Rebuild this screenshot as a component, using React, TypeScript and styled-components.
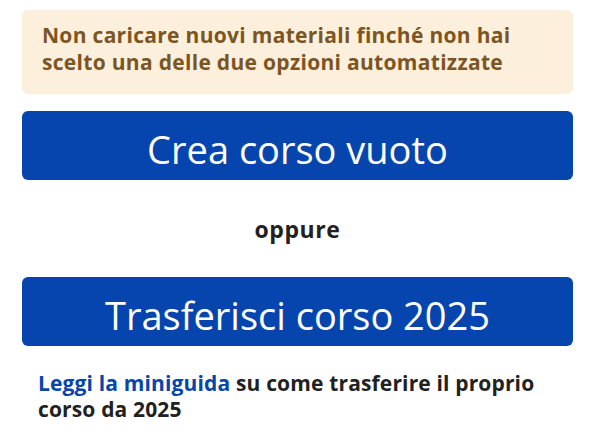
import styled, { createGlobalStyle } from "styled-components";

const GlobalStyle = createGlobalStyle`
  body {
    margin: 0;
    background: #ffffff;
    font-family: "Open Sans", "Noto Sans", sans-serif;
  }
`;

const Page = styled.main`
  display: flex;
  flex-direction: column;
  padding: 10px 22px 0;
`;

const Notice = styled.div`
  background: #fcefdc;
  border-radius: 6px;
  padding: 12px 20px 18px;
  color: #7b5523;
  font-size: 21px;
  font-weight: 700;
  line-height: 27px;
  letter-spacing: 0.3px;
`;

const BigButton = styled.button<{ $top: number }>`
  display: flex;
  align-items: center;
  justify-content: center;
  height: 69px;
  margin-top: ${(p) => p.$top}px;
  padding: 6px 0 0;
  border: none;
  border-radius: 6px;
  background: #0645ae;
  color: #ffffff;
  font-family: "Open Sans", "Noto Sans", sans-serif;
  font-size: 38px;
  font-weight: 400;
  cursor: pointer;
`;

const Or = styled.p`
  margin: 36px 0 0;
  text-align: center;
  color: #212121;
  font-size: 23px;
  font-weight: 700;
  line-height: 27px;
  letter-spacing: 0.6px;
`;

const Guide = styled.p`
  margin: 24px 0 0;
  padding: 0 16px;
  color: #212121;
  font-size: 21px;
  font-weight: 700;
  line-height: 26px;
  letter-spacing: 0.15px;
`;

const GuideLink = styled.a`
  color: #0645ae;
  text-decoration: none;
`;

export default function App() {
  return (
    <>
      <GlobalStyle />
      <Page>
        <Notice>
          Non caricare nuovi materiali finché non hai
          <br />
          scelto una delle due opzioni automatizzate
        </Notice>
        <BigButton $top={17}>Crea corso vuoto</BigButton>
        <Or>oppure</Or>
        <BigButton $top={34}>Trasferisci corso 2025</BigButton>
        <Guide>
          <GuideLink href="#">Leggi la miniguida</GuideLink> su come trasferire
          il proprio corso da 2025
        </Guide>
      </Page>
    </>
  );
}
